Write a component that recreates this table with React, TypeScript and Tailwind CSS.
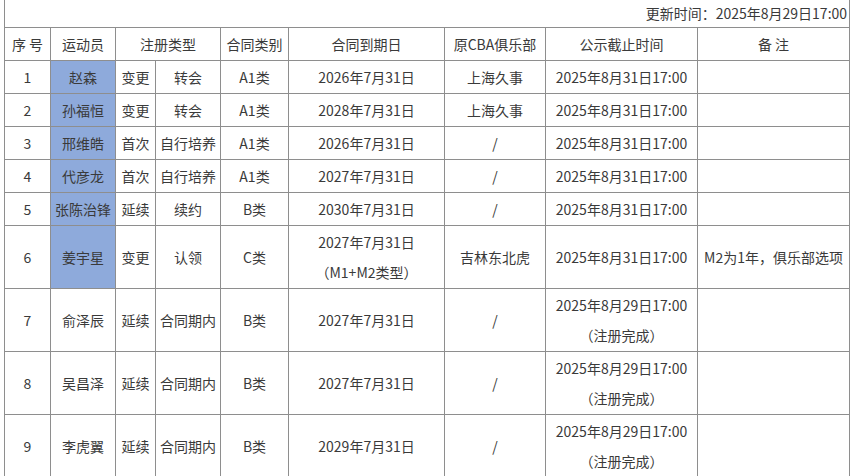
const rows = [
  { no: '1', name: '赵森', t1: '变更', t2: '转会', cat: 'A1类', end: ['2026年7月31日'], club: '上海久事', pub: ['2025年8月31日17:00'], note: '', blue: true },
  { no: '2', name: '孙福恒', t1: '变更', t2: '转会', cat: 'A1类', end: ['2028年7月31日'], club: '上海久事', pub: ['2025年8月31日17:00'], note: '', blue: true },
  { no: '3', name: '邢维皓', t1: '首次', t2: '自行培养', cat: 'A1类', end: ['2026年7月31日'], club: '/', pub: ['2025年8月31日17:00'], note: '', blue: true },
  { no: '4', name: '代彦龙', t1: '首次', t2: '自行培养', cat: 'A1类', end: ['2027年7月31日'], club: '/', pub: ['2025年8月31日17:00'], note: '', blue: true },
  { no: '5', name: '张陈治锋', t1: '延续', t2: '续约', cat: 'B类', end: ['2030年7月31日'], club: '/', pub: ['2025年8月31日17:00'], note: '', blue: true },
  { no: '6', name: '姜宇星', t1: '变更', t2: '认领', cat: 'C类', end: ['2027年7月31日', '（M1+M2类型）'], club: '吉林东北虎', pub: ['2025年8月31日17:00'], note: 'M2为1年，俱乐部选项', blue: true },
  { no: '7', name: '俞泽辰', t1: '延续', t2: '合同期内', cat: 'B类', end: ['2027年7月31日'], club: '/', pub: ['2025年8月29日17:00', '（注册完成）'], note: '', blue: false },
  { no: '8', name: '吴昌泽', t1: '延续', t2: '合同期内', cat: 'B类', end: ['2027年7月31日'], club: '/', pub: ['2025年8月29日17:00', '（注册完成）'], note: '', blue: false },
  { no: '9', name: '李虎翼', t1: '延续', t2: '合同期内', cat: 'B类', end: ['2029年7月31日'], club: '/', pub: ['2025年8月29日17:00', '（注册完成）'], note: '', blue: false },
];

const cell = 'border border-[#8e8e8e] px-0.5 py-px text-center whitespace-nowrap overflow-hidden';

const Lines = ({ items }: { items: string[] }) => (
  <>
    {items.map((s, i) => (
      <div key={i}>{s}</div>
    ))}
  </>
);

export default function App() {
  return (
    <div
      className="min-h-screen bg-white text-[14px] leading-[30px] text-[#3a3a3a]"
      style={{ fontFamily: '"Microsoft YaHei", "Noto Sans CJK SC", sans-serif' }}
    >
      <table className="ml-[4px] w-[845px] table-fixed border-collapse">
        <colgroup>
          <col className="w-[46px]" />
          <col className="w-[65px]" />
          <col className="w-[40px]" />
          <col className="w-[65px]" />
          <col className="w-[68px]" />
          <col className="w-[156px]" />
          <col className="w-[101px]" />
          <col className="w-[152px]" />
          <col className="w-[152px]" />
        </colgroup>
        <tbody>
          <tr>
            <td
              colSpan={9}
              className="border-x border-b border-[#8e8e8e] px-0.5 pb-0 pt-0 text-right leading-[27px]"
            >
              更新时间：2025年8月29日17:00
            </td>
          </tr>
          <tr>
            <td className={cell}>序 号</td>
            <td className={cell}>运动员</td>
            <td className={cell} colSpan={2}>注册类型</td>
            <td className={cell}>合同类别</td>
            <td className={cell}>合同到期日</td>
            <td className={cell}>原CBA俱乐部</td>
            <td className={cell}>公示截止时间</td>
            <td className={cell}>备 注</td>
          </tr>
          {rows.map((r) => (
            <tr key={r.no}>
              <td className={cell}>{r.no}</td>
              <td className={`${cell} ${r.blue ? 'bg-[#8eaadb]' : ''}`}>{r.name}</td>
              <td className={cell}>{r.t1}</td>
              <td className={cell}>{r.t2}</td>
              <td className={cell}>{r.cat}</td>
              <td className={cell}>
                <Lines items={r.end} />
              </td>
              <td className={cell}>{r.club}</td>
              <td className={cell}>
                <Lines items={r.pub} />
              </td>
              <td className={cell}>{r.note}</td>
            </tr>
          ))}
        </tbody>
      </table>
    </div>
  );
}
